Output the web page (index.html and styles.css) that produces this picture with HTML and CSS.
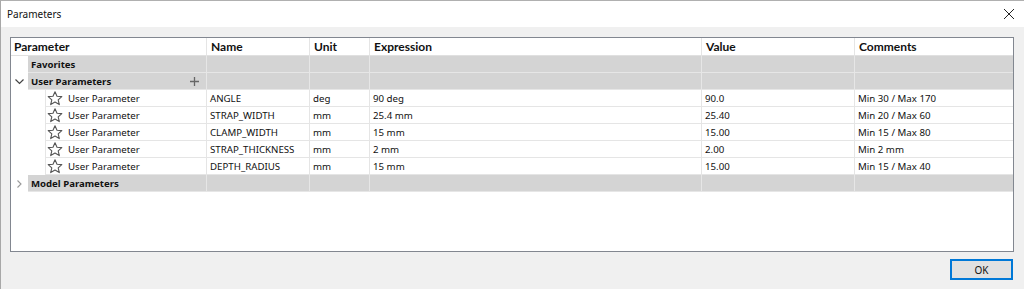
FILE: index.html
```html
<!DOCTYPE html>
<html lang="en">
<head>
    <meta charset="UTF-8">
    <title>Parameters</title>
    <link rel="stylesheet" href="styles.css">
</head>
<body>
    <div class="dialog">
        <div class="titlebar">
            <span class="title">Parameters</span>
            <svg class="close" width="12" height="12" viewBox="0 0 12 12"><path d="M1 1 L11 11 M11 1 L1 11" stroke="#222" stroke-width="1"/></svg>
        </div>

        <div class="content">
            <div class="grid">
                <div class="row head">
                    <div class="cell first">Parameter</div>
                    <div class="cell">Name</div>
                    <div class="cell">Unit</div>
                    <div class="cell">Expression</div>
                    <div class="cell">Value</div>
                    <div class="cell">Comments</div>
                </div>

                <div class="row group">
                    <div class="cell first"><span class="twist"></span><span class="label">Favorites</span></div>
                    <div class="cell"></div><div class="cell"></div><div class="cell"></div><div class="cell"></div><div class="cell"></div>
                </div>

                <div class="row group">
                    <div class="cell first">
                        <span class="twist"><svg width="9" height="6" viewBox="0 0 9 6"><path d="M0.5 0.5 L4.5 4.5 L8.5 0.5" fill="none" stroke="#444" stroke-width="1.2"/></svg></span>
                        <span class="label">User Parameters
                            <svg class="plus" width="9" height="9" viewBox="0 0 9 9"><path d="M4.5 0 V9 M0 4.5 H9" stroke="#666" stroke-width="1.3"/></svg>
                        </span>
                    </div>
                    <div class="cell"></div><div class="cell"></div><div class="cell"></div><div class="cell"></div><div class="cell"></div>
                </div>

                <div id="userRows"></div>

                <div class="row group">
                    <div class="cell first">
                        <span class="twist"><svg width="5" height="8" viewBox="0 0 5 8"><path d="M0.5 0.5 L4 4 L0.5 7.5" fill="none" stroke="#999" stroke-width="1.1"/></svg></span>
                        <span class="label">Model Parameters</span>
                    </div>
                    <div class="cell"></div><div class="cell"></div><div class="cell"></div><div class="cell"></div><div class="cell"></div>
                </div>
            </div>

            <div class="buttons">
                <button class="btn">OK</button>
            </div>
        </div>
    </div>

    <script>
        const params = [
            ['ANGLE', 'deg', '90 deg', '90.0', 'Min 30 / Max 170'],
            ['STRAP_WIDTH', 'mm', '25.4 mm', '25.40', 'Min 20 / Max 60'],
            ['CLAMP_WIDTH', 'mm', '15 mm', '15.00', 'Min 15 / Max 80'],
            ['STRAP_THICKNESS', 'mm', '2 mm', '2.00', 'Min 2 mm'],
            ['DEPTH_RADIUS', 'mm', '15 mm', '15.00', 'Min 15 / Max 40']
        ];

        const star = '<svg class="star" width="16" height="15" viewBox="0 0 16 15"><path d="M8 0.8 L10 5.2 L14.8 5.6 L11.2 8.8 L12.3 13.6 L8 11.1 L3.7 13.6 L4.8 8.8 L1.2 5.6 L6 5.2 Z" fill="none" stroke="#555" stroke-width="1.1" stroke-linejoin="round"/></svg>';

        const holder = document.getElementById('userRows');
        params.forEach(p => {
            const row = document.createElement('div');
            row.className = 'row item';
            row.innerHTML = `<div class="cell first"><span class="indent"></span><span class="label">${star}User Parameter</span></div>` +
                p.map(v => `<div class="cell">${v}</div>`).join('');
            holder.appendChild(row);
        });
    </script>
</body>
</html>
```

FILE: styles.css
```css
body {
    margin: 0;
    font-family: 'Noto Sans', sans-serif;
    font-size: 9.7px;
    color: #111111;
    background: #ffffff;
}

.dialog {
    width: 1024px;
    height: 289px;
    display: flex;
    flex-direction: column;
    box-sizing: border-box;
    border-left: 1px solid #a8a8a8;
    border-top: 1px solid #b0b0b0;
}

.titlebar {
    height: 26px;
    background: #ffffff;
    display: flex;
    align-items: center;
    justify-content: space-between;
    padding: 0 9px 0 6px;
}

.title {
    font-size: 10px;
    color: #111;
}

.content {
    flex: 1;
    background: #f0f0f0;
    padding: 10px 10px 0 9px;
}

.grid {
    height: 215px;
    border: 1px solid #828790;
    background: #ffffff;
    box-sizing: border-box;
    width: 1004px;
}

.row {
    display: grid;
    grid-template-columns: 196px 103px 60px 332px 153px 158px;
    height: 17px;
}

.cell {
    border-right: 1px solid #e5e5e5;
    border-bottom: 1px solid #e5e5e5;
    padding: 1px 0 0 3px;
    line-height: 15px;
    white-space: nowrap;
    overflow: hidden;
}

.cell:last-child {
    border-right: none;
}

.row.head {
    height: 18px;
}

.row.head .cell {
    font-family: 'Lato', 'Noto Sans', sans-serif;
    font-size: 12px;
    font-weight: bold;
    padding-top: 0;
    line-height: 18px;
    border-bottom-color: #e0e0e0;
    padding-left: 4px;
}

.row.head .cell.first {
    padding-left: 3px;
}

.row.group .cell {
    background: #d4d4d4;
    border-color: #e6e6e6;
}

.row.group .cell.first,
.row.item .cell.first {
    background: #ffffff;
    padding: 0;
    display: flex;
    border-bottom: none;
}

.twist {
    width: 17px;
    flex: none;
    display: flex;
    align-items: center;
    justify-content: center;
}

.row.group .label {
    flex: 1;
    background: #d4d4d4;
    font-size: 9.6px;
    font-weight: bold;
    padding: 1px 7px 0 3px;
    border-bottom: 1px solid #e6e6e6;
    display: flex;
    align-items: center;
    justify-content: space-between;
}

.plus {
    display: block;
    margin-top: -1px;
}

.indent {
    width: 34px;
    flex: none;
    border-right: 1px solid #e5e5e5;
}

.row.item .label {
    flex: 1;
    display: flex;
    align-items: center;
    gap: 5px;
    padding: 1px 0 0 1px;
    border-bottom: 1px solid #e5e5e5;
}

.star {
    display: block;
    margin-top: -1px;
}

.buttons {
    display: flex;
    justify-content: flex-end;
    padding: 7px 0 0;
}

.btn {
    width: 63px;
    height: 21px;
    font-family: 'Noto Sans', sans-serif;
    font-size: 10px;
    color: #111;
    background: #e1e1e1;
    border: 2px solid #0078d7;
    padding: 0;
    margin-right: 1px;
}
```
